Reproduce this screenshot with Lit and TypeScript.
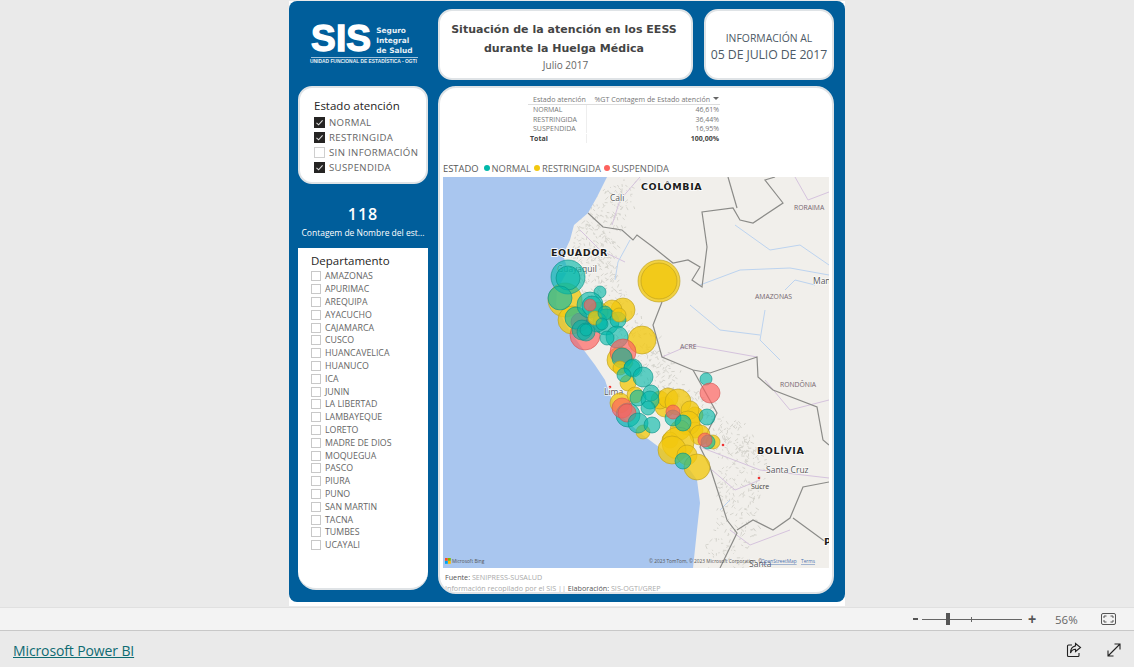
import { LitElement, css, html, svg } from 'lit'
import { customElement } from 'lit/decorators.js'

const T = '#01b8aa'
const Y = '#f2c80f'
const R = '#fd625e'

// x, y, r, color in page coordinates (map viewBox starts at 443,177)
const bubbles: [number, number, number, string][] = [
  [659, 281, 21, Y], [659, 281, 18, Y],
  [565, 300, 17, Y], [623, 310, 12, Y], [572, 320, 14, Y], [612, 310, 10, Y], [598, 312, 10, Y],
  [642, 340, 14, Y], [620, 360, 13, Y],
  [568, 277, 17, T], [568, 278, 12, T], [560, 298, 12, T], [600, 292, 6, T],
  [585, 335, 15, R], [580, 322, 9, R],
  [576, 318, 11, T], [590, 305, 13, T], [592, 306, 10, T], [606, 322, 13, T],
  [597, 322, 10, T], [582, 330, 10, T], [586, 332, 9, T], [586, 330, 6, T],
  [618, 320, 8, T], [595, 318, 7, Y], [605, 313, 7, T], [619, 315, 7, Y], [602, 324, 6, T],
  [617, 337, 11, T], [607, 338, 7, T], [590, 305, 6, R],
  [623, 352, 13, R], [622, 358, 10, T], [620, 368, 7, Y], [632, 368, 8, T],
  [628, 383, 8, Y], [620, 403, 10, Y], [635, 395, 8, Y], [665, 407, 10, Y], [660, 400, 9, Y],
  [668, 398, 10, Y], [678, 402, 13, Y], [643, 432, 7, Y], [695, 415, 8, Y], [690, 410, 9, Y],
  [695, 430, 8, Y], [688, 423, 12, Y], [700, 435, 10, Y], [680, 430, 10, Y],
  [670, 440, 8, Y], [678, 443, 16, Y], [672, 450, 14, Y],
  [687, 455, 10, Y], [697, 467, 13, Y], [713, 442, 7, Y],
  [633, 368, 9, T], [643, 377, 10, T], [624, 375, 7, T],
  [628, 415, 12, T], [622, 408, 10, R], [627, 413, 9, R],
  [638, 398, 8, T], [651, 393, 8, T], [650, 400, 9, T], [648, 408, 7, T],
  [638, 423, 10, T], [652, 425, 8, T],
  [673, 418, 8, T], [673, 412, 7, R], [683, 423, 8, T], [707, 417, 8, T],
  [683, 461, 8, T], [708, 442, 7, T], [705, 440, 7, R],
  [706, 379, 6, T], [710, 393, 10, R],
]

const landBorders = [
  'M588 213L603 227L622 230L633 240L637 235L653 247L673 263L688 260L700 267L692 280L702 287L707 247L702 212L733 208L740 220L753 223L783 203L765 180L775 177',
  'M728 177L737 208',
  'M662 302L653 325L662 357L693 370L710 373L757 357L758 377L773 390L817 407L823 440L829 445',
  'M693 370L717 413L700 447L710 467L727 520L737 533L720 568',
  'M737 530L753 520L773 530L790 518L803 487L829 482',
  'M793 518L823 540L829 543',
]

const stateLines = [
  'M662 357L690 345L757 357', 'M640 177L620 200L612 225', 'M580 230L600 250L625 262',
  'M700 447L760 470L829 478', 'M712 470L735 490L760 480', 'M730 530L750 545L790 530',
  'M795 177L808 200L829 192', 'M765 380L790 410L829 400',
]

const rivers = [
  'M735 225L770 250L800 245L829 265', 'M700 285L740 270L790 268L829 275',
  'M785 290L795 280L815 285', 'M690 305L720 330L760 335', 'M720 510L730 500',
  'M630 240L618 262L615 280', 'M765 310L760 340L780 360',
]

// seeded scatter for the Andes relief texture
const relief = (() => {
  let seed = 7
  const rnd = () => (seed = (seed * 16807) % 2147483647) / 2147483647
  const band: [number, number][] = [
    [618, 185], [600, 225], [592, 260], [605, 300], [640, 350], [665, 385],
    [715, 425], [745, 455], [740, 500], [725, 565],
  ]
  let d = ''
  for (let i = 0; i < band.length - 1; i++) {
    const [a, b] = band[i]
    const [c, e] = band[i + 1]
    for (let n = 0; n < 110; n++) {
      const t = rnd()
      const x = a + (c - a) * t + (rnd() - 0.5) * 44
      const y = b + (e - b) * t + (rnd() - 0.5) * 18
      d += `M${x.toFixed(1)} ${y.toFixed(1)}l${((rnd() - 0.5) * 7).toFixed(1)} ${((rnd() - 0.5) * 7).toFixed(1)}`
    }
  }
  return d
})()

const deptos = [
  'AMAZONAS', 'APURIMAC', 'AREQUIPA', 'AYACUCHO', 'CAJAMARCA', 'CUSCO', 'HUANCAVELICA',
  'HUANUCO', 'ICA', 'JUNIN', 'LA LIBERTAD', 'LAMBAYEQUE', 'LORETO', 'MADRE DE DIOS',
  'MOQUEGUA', 'PASCO', 'PIURA', 'PUNO', 'SAN MARTIN', 'TACNA', 'TUMBES', 'UCAYALI',
]

const estados = [
  { name: 'NORMAL', on: true },
  { name: 'RESTRINGIDA', on: true },
  { name: 'SIN INFORMACIÓN', on: false },
  { name: 'SUSPENDIDA', on: true },
]

const tabla = [
  ['NORMAL', '46,61%'],
  ['RESTRINGIDA', '36,44%'],
  ['SUSPENDIDA', '16,95%'],
]

const bubbleOpacity = (c: string) => (c === T ? 0.62 : c === Y ? 0.78 : 0.68)
const bubbleStroke = (c: string) => (c === T ? '#078f86' : c === Y ? '#b99c1c' : '#d34f4c')

@customElement('app-root')
export class AppRoot extends LitElement {
  renderMap() {
    return html`
      <svg class="map" viewBox="443 177 386 391" width="386" height="391">
        <rect x="443" y="177" width="386" height="391" fill="#f1efeb"></rect>
        <path d="${relief}" stroke="#d3d1cb" stroke-width="0.9" fill="none"></path>
        ${stateLines.map(d => svg`<path d="${d}" stroke="#d5c3dd" stroke-width="1" fill="none"></path>`)}
        ${rivers.map(d => svg`<path d="${d}" stroke="#bcd3ef" stroke-width="1" fill="none"></path>`)}
        ${landBorders.map(d => svg`<path d="${d}" stroke="#8b8b88" stroke-width="1.2" fill="none"></path>`)}
        <path fill="#a9c6ef" d="M443 177H607L597 197L588 213L574 225L570 240L563 255L568 270L557 290L556 305L566 325L580 345L595 365L605 380L610 395L620 415L640 433L667 453L690 470L697 480L700 503L697 530L693 568H443Z"></path>
        <circle cx="610" cy="387" r="1.3" fill="#e33"></circle>
        <circle cx="759" cy="478" r="1.3" fill="#e33"></circle>
        <circle cx="723" cy="445" r="1.3" fill="#e33"></circle>
        <text class="country" x="641" y="190">COLÔMBIA</text>
        <text class="country" x="551" y="256">EQUADOR</text>
        <text class="country" x="757" y="454">BOLÍVIA</text>
        <text class="city" x="610" y="201">Cali</text>
        <text class="city" x="557" y="272">Guayaquil</text>
        <text class="city" x="813" y="284">Man</text>
        <text class="city" x="604" y="395">Lima</text>
        <text class="city" x="766" y="473">Santa Cruz</text>
        <text class="small" x="751" y="489">Sucre</text>
        <text class="city" x="749" y="567">Santa</text>
        <text class="state" x="794" y="210">RORAIMA</text>
        <text class="state" x="755" y="299">AMAZONAS</text>
        <text class="state" x="680" y="349">ACRE</text>
        <text class="state" x="780" y="387">RONDÔNIA</text>
        <text class="country" x="824" y="545">P</text>
        ${bubbles.map(([x, y, r, c]) => svg`
          <circle cx="${x}" cy="${y}" r="${r}" fill="${c}" fill-opacity="${bubbleOpacity(c)}" stroke="${bubbleStroke(c)}" stroke-opacity="0.6" stroke-width="1"></circle>`)}
        <g>
          <rect x="445" y="558" width="2.8" height="2.8" fill="#f25022"></rect>
          <rect x="448" y="558" width="2.8" height="2.8" fill="#7fba00"></rect>
          <rect x="445" y="561" width="2.8" height="2.8" fill="#00a4ef"></rect>
          <rect x="448" y="561" width="2.8" height="2.8" fill="#ffb900"></rect>
        </g>
        <text class="attr" x="452" y="562.5">Microsoft Bing</text>
        <text class="attr" x="649" y="563">© 2023 TomTom, © 2023 Microsoft Corporation, ©</text>
        <text class="attr link" x="761" y="563">OpenStreetMap</text>
        <text class="attr link" x="801" y="563">Terms</text>
      </svg>
    `
  }

  render() {
    return html`
      <div class="stage">
        <div class="paper">
          <div class="report">
            <div class="left">
              <div class="logo">
                <div class="logo-top">
                  <span class="sis">SIS</span>
                  <span class="seguro">Seguro<br>Integral<br>de Salud</span>
                </div>
                <div class="logo-sub">UNIDAD FUNCIONAL DE ESTADÍSTICA - OGTI</div>
              </div>
              <div class="card filter">
                <div class="slicer-title">Estado atención</div>
                ${estados.map(e => html`
                  <div class="estado">
                    <span class="check ${e.on ? 'on' : ''}">
                      ${e.on ? html`<svg viewBox="0 0 11 11" width="11" height="11"><path d="M2.5 5.8L4.6 7.8L8.6 3.4" stroke="#ddd" stroke-width="1.1" fill="none"></path></svg>` : ''}
                    </span>
                    ${e.name}
                  </div>`)}
              </div>
              <div class="kpi">
                <div class="kpi-num">118</div>
                <div class="kpi-label">Contagem de Nombre del est...</div>
              </div>
              <div class="dept">
                <div class="slicer-title">Departamento</div>
                ${deptos.map(d => html`<div class="dept-row"><span class="box"></span>${d}</div>`)}
              </div>
            </div>
            <div class="right">
              <div class="top">
                <div class="card title">
                  <div class="title-main">Situación de la atención en los EESS<br>durante la Huelga Médica</div>
                  <div class="title-sub">Julio 2017</div>
                </div>
                <div class="card info">
                  <div class="info-a">INFORMACIÓN AL</div>
                  <div class="info-b">05 DE JULIO DE 2017</div>
                </div>
              </div>
              <div class="card main">
                <div class="table">
                  <div class="th c1">Estado atención</div>
                  <div class="th c2">%GT Contagem de Estado atención<span class="sort"></span></div>
                  ${tabla.map(r => html`<div class="c1">${r[0]}</div><div class="c2">${r[1]}</div>`)}
                  <div class="c1 total">Total</div>
                  <div class="c2 total">100,00%</div>
                </div>
                <div class="legend">
                  <span class="legend-title">ESTADO</span>
                  <span class="item"><i class="dot teal"></i>NORMAL</span>
                  <span class="item"><i class="dot yellow"></i>RESTRINGIDA</span>
                  <span class="item"><i class="dot red"></i>SUSPENDIDA</span>
                </div>
                ${this.renderMap()}
                <div class="notes">
                  <div><b>Fuente:</b> SENIPRESS-SUSALUD</div>
                  <div>Información recopilado por el SIS || <b>Elaboración:</b> SIS-OGTI/GREP</div>
                </div>
              </div>
            </div>
          </div>
        </div>
      </div>
      <div class="zoombar">
        <span class="zoom-minus"></span>
        <div class="slider"><span class="tick"></span><span class="thumb"></span></div>
        <span class="zoom-plus">+</span>
        <span class="zoom-val">56%</span>
        <svg class="fit" viewBox="0 0 15 12" width="15" height="12" fill="none" stroke="#555" stroke-width="1">
          <rect x="0.5" y="0.5" width="14" height="11" rx="1.5"></rect>
          <path d="M3 5V3H5.5M12 5V3H9.5M3 7V9H5.5M12 7V9H9.5"></path>
        </svg>
      </div>
      <div class="footer">
        <a class="brand">Microsoft Power BI</a>
        <div class="actions">
          <svg viewBox="0 0 16 16" width="16" height="16" fill="none" stroke="#222" stroke-width="1.1">
            <path d="M6 3H2.5A1 1 0 0 0 1.5 4V13.5A1 1 0 0 0 2.5 14.500H12A1 1 0 0 0 13 13.500V11"></path>
            <path d="M9.500 1.500L14.500 5.500L9.500 9.500V7.300C7 7.300 5.500 8.500 4.500 11C4.500 7.500 6.500 4.500 9.500 3.900Z"></path>
          </svg>
          <svg viewBox="0 0 16 16" width="16" height="16" fill="none" stroke="#222" stroke-width="1.1">
            <path d="M2 14L14 2M8.500 2H14V7.500M2 8.500V14H7.500"></path>
          </svg>
        </div>
      </div>
    `
  }

  static styles = css`
    :host {
      display: flex;
      flex-direction: column;
      width: 1134px;
      height: 667px;
      overflow: hidden;
      background: #eaeaea;
      font-family: 'Open Sans', 'Noto Sans', sans-serif;
    }
    .stage {
      height: 607px;
      display: flex;
      justify-content: center;
      padding-top: 1px;
      box-sizing: border-box;
    }
    .paper {
      width: 556px;
      height: 605px;
      background: #fff;
    }
    .report {
      height: 601px;
      box-sizing: border-box;
      background: #005e9b;
      border-radius: 8px;
      padding: 8px 11px 8px 9px;
      display: flex;
      gap: 10px;
    }
    .card {
      background: #fff;
      border: 2px solid #dfe3e6;
      border-radius: 14px;
      box-sizing: border-box;
    }
    .left {
      width: 130px;
      display: flex;
      flex-direction: column;
    }
    .right {
      width: 396px;
      display: flex;
      flex-direction: column;
      gap: 6px;
    }
    .logo {
      height: 71px;
      margin-bottom: 6px;
      color: #fff;
      padding-top: 12px;
      box-sizing: border-box;
    }
    .logo-top {
      display: flex;
      align-items: center;
      gap: 5px;
      margin-left: 13px;
      height: 36px;
      border-bottom: 1px solid #9fc2da;
      width: 107px;
    }
    .sis {
      font-family: 'Liberation Sans', sans-serif;
      font-weight: 700;
      font-size: 37px;
      line-height: 32px;
      letter-spacing: 0.2px;
      -webkit-text-stroke: 1.4px #fff;
    }
    .seguro {
      font-family: 'DejaVu Sans', sans-serif;
      font-weight: 700;
      font-size: 7.4px;
      line-height: 10px;
      margin-top: 4px;
      color: #e6eff5;
    }
    .logo-sub {
      font-family: 'Liberation Sans', sans-serif;
      font-weight: 700;
      font-size: 4.9px;
      line-height: 8px;
      white-space: nowrap;
      margin-left: 12px;
      color: #e6eff5;
    }
    .filter {
      height: 98px;
      padding: 10px 0 0 14px;
    }
    .slicer-title {
      font-size: 11.5px;
      line-height: 16px;
      margin-bottom: 1px;
      color: #252423;
    }
    .estado {
      display: flex;
      align-items: center;
      gap: 4px;
      height: 15px;
      font-size: 9.6px;
      letter-spacing: 0.35px;
      color: #666;
      white-space: nowrap;
    }
    .check {
      width: 11px;
      height: 11px;
      box-sizing: border-box;
      border: 1px solid #cfcfcf;
      flex: none;
      display: block;
    }
    .check.on {
      background: #252423;
      border: 0;
    }
    .check svg {
      display: block;
    }
    .kpi {
      height: 64px;
      color: #fff;
      text-align: center;
      padding-top: 19px;
      box-sizing: border-box;
    }
    .kpi-num {
      font-size: 16px;
      line-height: 22px;
      font-weight: 600;
      letter-spacing: 1px;
    }
    .kpi-label {
      font-size: 8.5px;
      line-height: 14px;
      margin-top: 1px;
      white-space: nowrap;
    }
    .dept {
      height: 342px;
      box-sizing: border-box;
      background: #fff;
      border-radius: 0 0 18px 18px;
      border-bottom: 2px solid #dfe3e6;
      padding: 5px 0 0 13px;
    }
    .dept-row {
      height: 12.8px;
      display: flex;
      align-items: center;
      gap: 4px;
      font-size: 8.8px;
      color: #666;
      white-space: nowrap;
    }
    .box {
      width: 10px;
      height: 10px;
      box-sizing: border-box;
      border: 1px solid #c8c8c8;
      flex: none;
    }
    .top {
      display: flex;
      gap: 11px;
      height: 71px;
    }
    .title {
      width: 255px;
      text-align: center;
      padding-top: 10px;
    }
    .title-main {
      font-family: 'DejaVu Sans', sans-serif;
      font-weight: 700;
      font-size: 11px;
      line-height: 18.5px;
      letter-spacing: 0.03px;
      padding-right: 3px;
      color: #444;
      white-space: nowrap;
    }
    .title-sub {
      font-size: 10px;
      line-height: 14px;
      color: #666;
    }
    .info {
      width: 130px;
      text-align: center;
      padding-top: 20px;
      color: #4d5a66;
      white-space: nowrap;
    }
    .info-a {
      font-size: 10.4px;
      line-height: 15px;
    }
    .info-b {
      font-size: 12.3px;
      line-height: 18px;
      letter-spacing: -0.1px;
    }
    .main {
      height: 508px;
      padding: 0 3px;
      overflow: hidden;
      border-radius: 18px;
    }
    .table {
      display: grid;
      grid-template-columns: 59px 133px;
      margin: 7px 0 0 85px;
      width: 192px;
      font-size: 7px;
      line-height: 9.3px;
      color: #777;
      height: 60px;
      align-content: start;
    }
    .c1 {
      padding-left: 5px;
      border-right: 1px solid #eee;
      white-space: nowrap;
    }
    .c2 {
      text-align: right;
      padding-right: 1px;
      white-space: nowrap;
    }
    .th {
      border-bottom: 1px solid #ddd;
      color: #777;
      font-size: 7.1px;
    }
    .th.c1 {
      border-right: 0;
    }
    .sort {
      display: inline-block;
      width: 0;
      height: 0;
      margin-left: 3px;
      vertical-align: 2px;
      border-left: 3.5px solid transparent;
      border-right: 3.5px solid transparent;
      border-top: 3px solid #666;
    }
    .total {
      font-weight: 700;
      color: #444;
      margin-top: 0.5px;
    }
    .c1.total {
      padding-left: 2px;
    }
    .legend {
      display: flex;
      align-items: center;
      height: 16px;
      font-size: 9.4px;
      color: #666;
      margin-top: 5px;
      margin-bottom: 1px;
      white-space: nowrap;
    }
    .legend-title {
      margin-right: 5px;
      color: #555;
    }
    .item {
      display: flex;
      align-items: center;
      margin-right: 3px;
    }
    .dot {
      width: 6px;
      height: 6px;
      border-radius: 50%;
      margin-right: 2px;
    }
    .teal { background: #01b8aa; }
    .yellow { background: #f2c80f; }
    .red { background: #fd625e; }
    .map {
      display: block;
    }
    .map .country {
      font-family: 'DejaVu Sans', sans-serif;
      font-weight: 700;
      font-size: 9.5px;
      letter-spacing: 0.6px;
      fill: #1d1d1d;
      paint-order: stroke;
      stroke: #fff;
      stroke-width: 1.5px;
    }
    .map .city {
      font-family: 'Open Sans', sans-serif;
      font-size: 8.5px;
      fill: #555;
      paint-order: stroke;
      stroke: #fff;
      stroke-width: 1px;
    }
    .map .small {
      font-family: 'Open Sans', sans-serif;
      font-size: 7px;
      fill: #444;
    }
    .map .state {
      font-family: 'Open Sans', sans-serif;
      font-size: 6.8px;
      fill: #76666f;
    }
    .map .attr {
      font-family: 'Open Sans', sans-serif;
      font-size: 4.8px;
      fill: #555;
    }
    .map .link {
      fill: #4d73b0;
      text-decoration: underline;
    }
    .notes {
      font-size: 7.2px;
      line-height: 11px;
      color: #aaa;
      padding: 4px 0 0 2px;
      white-space: nowrap;
    }
    .notes b {
      font-weight: 400;
      color: #555;
    }
    .zoombar {
      height: 24px;
      box-sizing: border-box;
      background: #f3f3f3;
      border-top: 1px solid #e0e0e0;
      border-bottom: 1px solid #c8c8c8;
      display: flex;
      align-items: center;
      color: #555;
    }
    .zoom-minus {
      width: 5px;
      height: 2px;
      background: #555;
      margin-left: 913px;
    }
    .slider {
      width: 100px;
      height: 1px;
      background: #666;
      margin-left: 4px;
      position: relative;
    }
    .tick {
      position: absolute;
      left: 49px;
      top: -2px;
      width: 1px;
      height: 5px;
      background: #666;
    }
    .thumb {
      position: absolute;
      left: 24px;
      top: -6px;
      width: 4px;
      height: 12px;
      background: #555;
    }
    .zoom-plus {
      font-family: 'Liberation Sans', sans-serif;
      font-size: 14px;
      font-weight: 700;
      margin-left: 6px;
      width: 9px;
    }
    .zoom-val {
      font-size: 11.5px;
      margin-left: 18px;
      width: 38px;
      color: #666;
    }
    .fit {
      margin-left: 8px;
    }
    .footer {
      flex: 1;
      display: flex;
      align-items: center;
      justify-content: space-between;
      padding: 2px 12px 0 13px;
      box-sizing: border-box;
      background: #eaeaea;
    }
    .brand {
      font-size: 14px;
      color: #0e6b72;
      text-decoration: underline;
      letter-spacing: -0.12px;
    }
    .actions {
      display: flex;
      gap: 24px;
    }
    .actions svg {
      display: block;
      margin-top: -1px;
    }
  `
}

declare global {
  interface HTMLElementTagNameMap {
    'app-root': AppRoot
  }
}
